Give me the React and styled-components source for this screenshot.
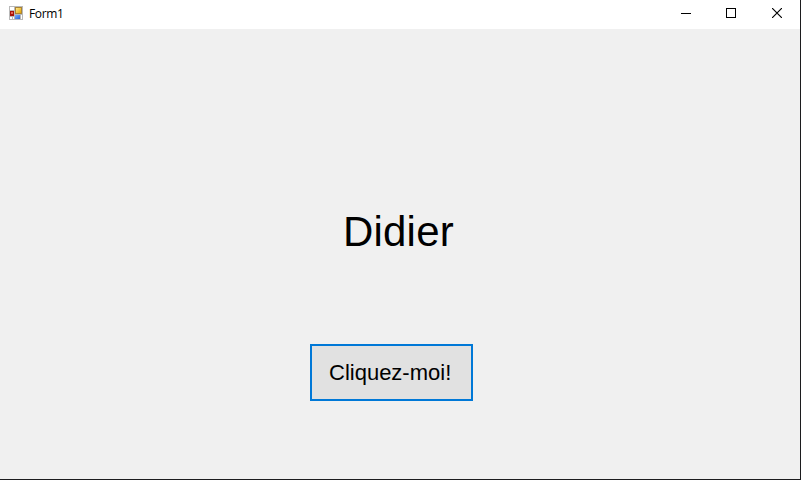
import React from 'react';
import styled, { createGlobalStyle } from 'styled-components';

const GlobalStyle = createGlobalStyle`
  * { box-sizing: border-box; }
  body { margin: 0; background: #1c1c1e; overflow: hidden; }
`;

const Window = styled.div`
  width: 801px;
  height: 480px;
  display: flex;
  flex-direction: column;
  background: #f0f0f0;
  border-right: 1px solid #1c1c1e;
  border-bottom: 1px solid #1c1c1e;
  color: #000;
`;

const TitleBar = styled.header`
  height: 29px;
  flex: none;
  display: flex;
  align-items: flex-start;
  padding-left: 9px;
  background: #fff;
`;

const AppIcon = styled.svg`
  display: block;
  flex: none;
  margin-top: 6px;
`;

const Title = styled.span`
  flex: 1;
  margin-left: 6px;
  font: 12px/28px "Open Sans", "Noto Sans", sans-serif;
  letter-spacing: -0.35px;
`;

const Controls = styled.div`
  display: flex;
  width: 137px;
`;

const CaptionButton = styled.button`
  display: flex;
  align-items: flex-start;
  flex: none;
  width: ${(p) => p.$width}px;
  height: 28px;
  padding: 8px 0 0 ${(p) => p.$inset}px;
  border: 0;
  background: transparent;
  svg { display: block; flex: none; }
`;

const Client = styled.main`
  flex: 1;
  display: flex;
  flex-direction: column;
  align-items: flex-start;
  font-family: "Liberation Sans", Arial, sans-serif;
`;

const NameLabel = styled.div`
  margin: 179px 0 0 343px;
  font-size: 42px;
  line-height: 48px;
  letter-spacing: 0.2px;
`;

const ClickButton = styled.button`
  width: 163px;
  height: 57px;
  margin: 88px 0 0 310px;
  padding: 0 0 0 17px;
  border: 2px solid #0078d7;
  background: #e1e1e1;
  color: #000;
  font: 22px/26px "Liberation Sans", Arial, sans-serif;
  text-align: left;
`;

function FormIcon() {
  return (
    <AppIcon width="14" height="14" viewBox="0 0 14 14">
      <defs>
        <linearGradient id="gold" x1="0" y1="0" x2="1" y2="1">
          <stop offset="0" stopColor="#ffe98c" />
          <stop offset="1" stopColor="#e5a400" />
        </linearGradient>
        <linearGradient id="blue" x1="0" y1="0" x2="1" y2="1">
          <stop offset="0" stopColor="#79adff" />
          <stop offset="1" stopColor="#2864d0" />
        </linearGradient>
      </defs>
      <rect width="14" height="14" fill="#b9b9b9" />
      <path d="M1 1h4v3H1zM1 11h2v2H1zM4 11h1v2H4zM12 9h1v4h-1z" fill="#fff" />
      <rect x="6" y="1" width="7" height="7" fill="#a98335" />
      <rect x="7" y="2" width="5" height="5" fill="url(#gold)" />
      <rect x="1" y="5" width="4" height="5" fill="#a71408" />
      <rect x="2" y="6" width="2" height="2" fill="#e96552" />
      <rect x="6" y="9" width="5" height="4" fill="url(#blue)" />
    </AppIcon>
  );
}

export default function App() {
  return (
    <>
      <GlobalStyle />
      <Window>
        <TitleBar>
          <FormIcon />
          <Title>Form1</Title>
          <Controls>
            <CaptionButton $width={46} $inset={18} aria-label="Réduire">
              <svg width="10" height="11" shapeRendering="crispEdges">
                <path d="M0 5.5h10" stroke="#000" />
              </svg>
            </CaptionButton>
            <CaptionButton $width={46} $inset={17} aria-label="Agrandir">
              <svg width="10" height="10" shapeRendering="crispEdges">
                <rect x=".5" y=".5" width="9" height="9" fill="none" stroke="#000" />
              </svg>
            </CaptionButton>
            <CaptionButton $width={45} $inset={17} aria-label="Fermer">
              <svg width="10" height="10">
                <path d="M0 0l10 10M10 0L0 10" stroke="#000" strokeWidth="1.15" />
              </svg>
            </CaptionButton>
          </Controls>
        </TitleBar>
        <Client>
          <NameLabel>Didier</NameLabel>
          <ClickButton>Cliquez-moi!</ClickButton>
        </Client>
      </Window>
    </>
  );
}
